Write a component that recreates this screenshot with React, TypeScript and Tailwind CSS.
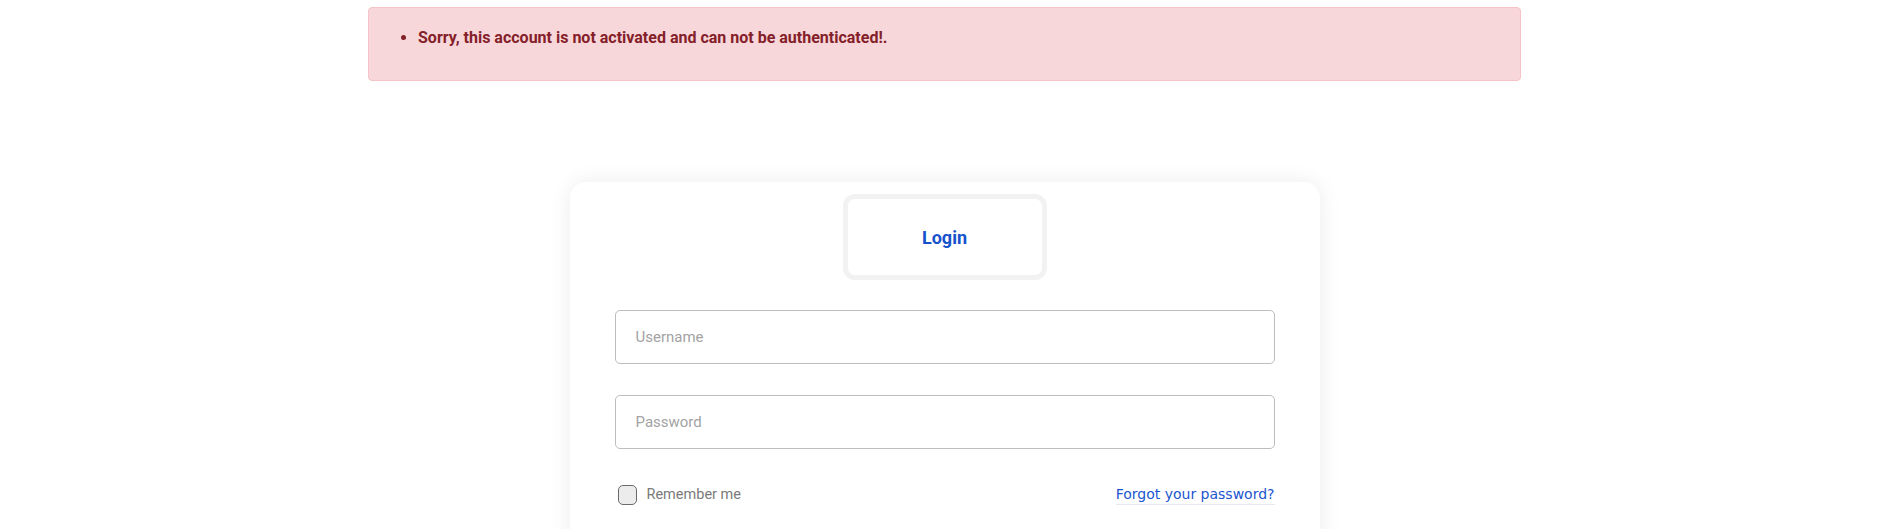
import React from 'react';

const roboto = { fontFamily: 'Roboto, "Liberation Sans", sans-serif' };

const App: React.FC = () => {
  return (
    <div className="w-[1904px] h-[529px] overflow-hidden bg-white font-['Roboto',sans-serif]">
      <div className="w-[1889px] pt-[7px]">
        {/* Error alert */}
        <div className="mx-auto w-[1153px] rounded border border-[#f5c2c7] bg-[#f8d7da] pt-[18px] pb-4 pl-[18px] pr-[18px] text-[#842029]">
          <ul className="list-disc pl-[31px] mb-[14px]">
            <li className="text-base leading-6 font-bold">
              Sorry, this account is not activated and can not be authenticated!.
            </li>
          </ul>
        </div>

        {/* Login card */}
        <div className="mx-auto mt-[101px] w-[750px] h-[400px] rounded-2xl bg-white shadow-[0_0_22px_rgba(0,0,0,0.08)] pt-3 px-[45px]">
          <div className="mx-auto flex h-[86px] w-[204px] items-center justify-center rounded-xl border-[5px] border-[#f2f2f2] pt-[2px]">
            <span className="text-lg font-bold text-[#1652cc]">Login</span>
          </div>

          <input
            type="text"
            placeholder="Username"
            className="mt-[30px] block h-[54px] w-full rounded-[5px] border border-[#bdbdbd] px-5 text-[15px] outline-none placeholder:text-[#a3a3a3]"
            style={roboto}
          />
          <input
            type="password"
            placeholder="Password"
            className="mt-[31px] block h-[54px] w-full rounded-[5px] border border-[#bdbdbd] px-5 text-[15px] outline-none placeholder:text-[#a3a3a3]"
            style={roboto}
          />

          <div className="mt-[35px] flex items-center justify-between">
            <label className="flex items-center gap-[10px] pl-[3px]">
              <span className="block h-5 w-[19px] rounded-[5px] border border-[#6b6b6b] bg-[#ececec]" />
              <span className="text-[14.5px] text-[#7a7a7a]">Remember me</span>
            </label>
            <a
              href="#"
              className="border-b border-[#e6e9ef] font-['DejaVu_Sans',sans-serif] text-sm leading-5 text-[#1a55cf]"
            >
              Forgot your password?
            </a>
          </div>
        </div>
      </div>
    </div>
  );
};

export default App;
